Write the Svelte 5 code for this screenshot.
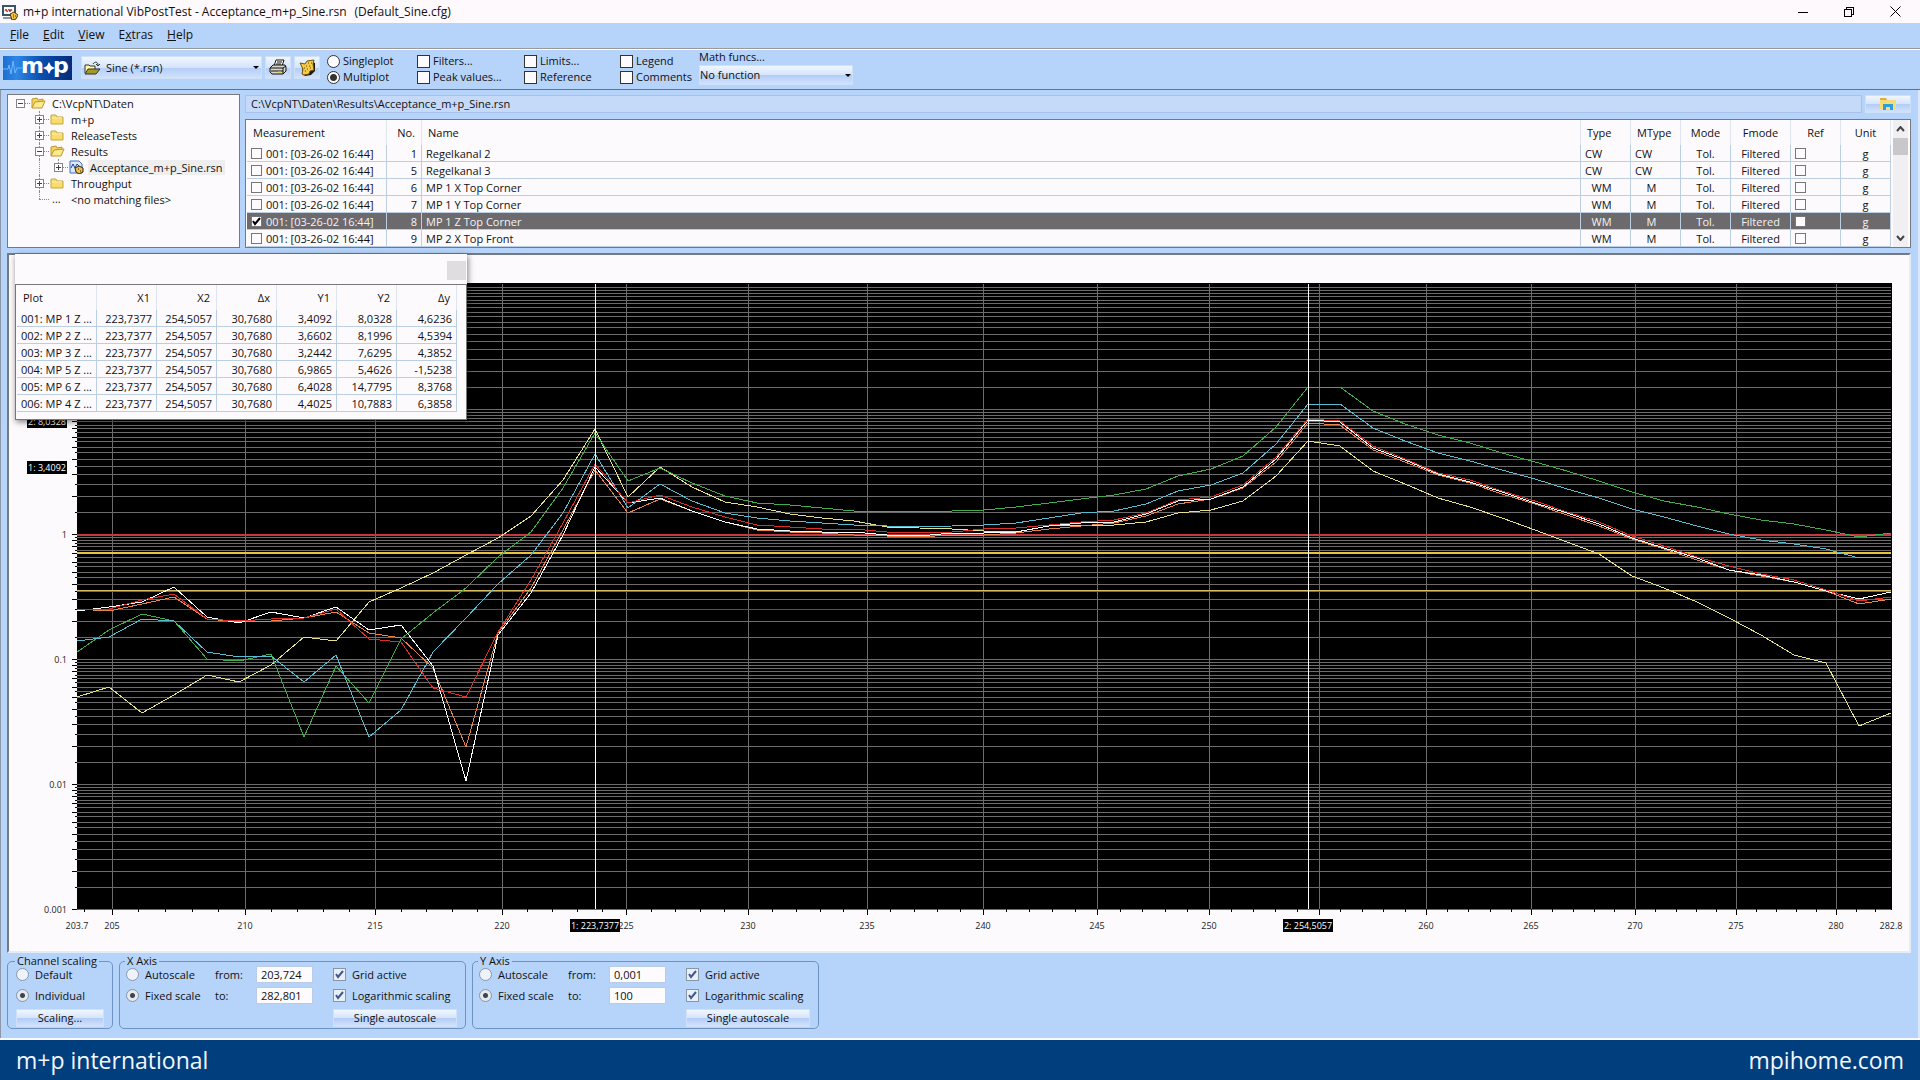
<script lang="ts">
    let width = $state(1900);
    let height = $state(696);

    const menu = ["File", "Edit", "View", "Extras", "Help"];
    const accessKey: Record<string, number> = { Extras: 1 };

    const tree = [
        { depth: 0, label: "C:\\VcpNT\\Daten", icon: "open", toggle: "-", last: true },
        { depth: 1, label: "m+p", icon: "folder", toggle: "+" },
        { depth: 1, label: "ReleaseTests", icon: "folder", toggle: "+" },
        { depth: 1, label: "Results", icon: "open", toggle: "-" },
        { depth: 2, label: "Acceptance_m+p_Sine.rsn", icon: "file", toggle: "+", selected: true, last: true },
        { depth: 1, label: "Throughput", icon: "folder", toggle: "+" },
        { depth: 1, label: "<no matching files>", icon: "dots", toggle: "", last: true }
    ];

    const optionGroups = [
        ["Filters...", "Peak values..."],
        ["Limits...", "Reference"],
        ["Legend", "Comments"]
    ];

    const stamp = "001: [03-26-02 16:44]";
    const channels = [
        { no: 1, name: "Regelkanal 2", type: "CW", mtype: "CW" },
        { no: 5, name: "Regelkanal 3", type: "CW", mtype: "CW" },
        { no: 6, name: "MP 1 X Top Corner", type: "WM", mtype: "M" },
        { no: 7, name: "MP 1 Y Top Corner", type: "WM", mtype: "M" },
        { no: 8, name: "MP 1 Z Top Corner", type: "WM", mtype: "M", selected: true },
        { no: 9, name: "MP 2 X Top Front", type: "WM", mtype: "M" }
    ];

    const readings = [
        ["001: MP 1 Z ...", "223,7377", "254,5057", "30,7680", "3,4092", "8,0328", "4,6236"],
        ["002: MP 2 Z ...", "223,7377", "254,5057", "30,7680", "3,6602", "8,1996", "4,5394"],
        ["003: MP 3 Z ...", "223,7377", "254,5057", "30,7680", "3,2442", "7,6295", "4,3852"],
        ["004: MP 5 Z ...", "223,7377", "254,5057", "30,7680", "6,9865", "5,4626", "-1,5238"],
        ["005: MP 6 Z ...", "223,7377", "254,5057", "30,7680", "6,4028", "14,7795", "8,3768"],
        ["006: MP 4 Z ...", "223,7377", "254,5057", "30,7680", "4,4025", "10,7883", "6,3858"]
    ];

    const axes = [
        { id: "x", title: "X Axis", from: "203,724", to: "282,801" },
        { id: "y", title: "Y Axis", from: "0,001", to: "100" }
    ];

    // Evenly spaced samples, measured down from the top of the plot (625 units = 5 decades)
    const traces = [
        { color: "#e6e08a", y: [413, 403, 429, 411, 391, 398, 381, 353, 357, 318, 304, 289, 271, 254, 232, 196, 145, 213, 183, 203, 218, 223, 230, 234, 237, 243, 244, 245, 247, 248, 242, 241, 241, 238, 229, 226, 217, 192, 157, 162, 187, 200, 214, 223, 234, 246, 258, 270, 292, 304, 318, 334, 351, 371, 379, 442, 429] },
        { color: "#3fae49", y: [368, 346, 330, 337, 375, 377, 370, 453, 382, 419, 355, 329, 304, 273, 248, 204, 149, 197, 184, 199, 212, 219, 221, 224, 227, 227, 227, 227, 226, 223, 219, 215, 211, 205, 192, 185, 172, 143, 103, 103, 127, 140, 151, 159, 169, 178, 187, 197, 208, 217, 223, 230, 236, 240, 246, 253, 249] },
        { color: "#56bdd2", y: [357, 353, 335, 337, 368, 373, 372, 398, 371, 453, 426, 368, 334, 300, 271, 229, 170, 224, 200, 217, 229, 234, 237, 239, 241, 242, 243, 242, 241, 239, 234, 229, 227, 220, 207, 201, 189, 160, 120, 120, 144, 157, 169, 177, 186, 195, 205, 214, 225, 233, 242, 250, 256, 260, 265, 274, 273] },
        { color: "#e8844a", y: [325, 327, 320, 313, 335, 338, 337, 334, 328, 349, 354, 384, 463, 349, 304, 246, 186, 229, 215, 227, 238, 246, 248, 249, 251, 252, 253, 251, 251, 249, 245, 242, 239, 232, 220, 215, 204, 178, 139, 141, 166, 178, 191, 199, 210, 220, 231, 242, 255, 265, 276, 286, 292, 298, 307, 320, 315] },
        { color: "#ffffff", y: [327, 323, 318, 303, 333, 339, 328, 334, 323, 346, 341, 382, 497, 351, 309, 251, 183, 219, 214, 227, 238, 245, 247, 248, 248, 251, 252, 249, 249, 248, 242, 239, 238, 230, 217, 215, 203, 175, 136, 138, 164, 176, 190, 198, 208, 219, 229, 240, 254, 264, 274, 286, 291, 298, 307, 315, 308] },
        { color: "#dc2f27", y: [325, 325, 316, 310, 335, 337, 335, 334, 325, 355, 358, 404, 413, 348, 296, 239, 180, 219, 211, 223, 233, 241, 243, 245, 245, 248, 249, 248, 245, 244, 241, 238, 236, 229, 216, 213, 201, 173, 135, 137, 162, 175, 189, 196, 207, 217, 228, 238, 252, 262, 273, 282, 290, 296, 306, 317, 313] }
    ];

    const limits = [
        { value: 1, color: "#c23a40", weight: 2 },
        { value: 0.72, color: "#e8bf3e", weight: 2 },
        { value: 0.354, color: "#d8bc62", weight: 1 },
        { value: 0.25, color: "#cc2222", weight: 1 }
    ];

    const xMin = 203.724;
    const xMax = 282.801;
    const left = 68;
    const top = 29;

    let right = $derived(width - 18);
    let bottom = $derived(height - 42);

    function xPos(v: number) {
        return Math.round(left + ((right - left) * Math.log(v / xMin)) / Math.log(xMax / xMin));
    }

    function yPos(v: number) {
        return Math.round(bottom - ((bottom - top) * (Math.log10(v) + 3)) / 5);
    }

    function points(ys: number[]) {
        return ys
            .map((y, i) => {
                const px = Math.round(left + ((right - left) * i) / (ys.length - 1));
                const py = Math.round(top + ((bottom - top) * y) / 625);
                return `${px},${py}`;
            })
            .join(" ");
    }

    const xTicks = Array.from({ length: 79 }, (_, i) => 204 + i);
    const yTicks: { value: number; long: boolean }[] = [];
    for (let decade = -3; decade < 2; decade++) {
        for (let half = 2; half < 20; half++) {
            yTicks.push({ value: (half / 2) * 10 ** decade, long: half % 2 === 0 });
        }
    }
    const yLabels = [
        [1, "1"],
        [0.1, "0.1"],
        [0.01, "0.01"],
        [0.001, "0.001"]
    ] as [number, string][];
    const cursors = [
        { x: 223.7377, y: 3.4092, xText: "1: 223,7377", yText: "1: 3,4092" },
        { x: 254.5057, y: 8.0328, xText: "2: 254,5057", yText: "2: 8,0328" }
    ];

    // A tick label that lies fully behind a cursor tag is left out
    function isCovered(tick: number) {
        return cursors.some((c) => Math.abs(xPos(c.x) - xPos(tick)) < 16);
    }
</script>

{#snippet folder()}
    <svg class="icon" width="15" height="14" viewBox="0 0 15 14">
        <path d="M1 3h5l1 2h6v7H1z" fill="#f7dc6c" stroke="#c9a53a" />
        <path d="M2 6h10" stroke="#fff3b0" />
    </svg>
{/snippet}

{#snippet openFolder()}
    <svg class="icon" width="15" height="14" viewBox="0 0 15 14">
        <path d="M1 12V3l5-1 1 2 5-1v3" fill="#f5d45c" stroke="#bd9730" />
        <path d="M1 12l3-6 10-1-3 7z" fill="#fbe98e" stroke="#bd9730" />
    </svg>
{/snippet}

<div class="window">
    <header class="titlebar">
        <svg width="16" height="16" viewBox="0 0 16 16">
            <path d="M0 1h14v11H0z" fill="#3b5568" />
            <path d="M2 3h10v7H2z" fill="#fff" />
            <path d="M3 7l1-2 1 3 2-3 1 3 1-3 1 2" fill="none" stroke="#b33" />
            <path d="M1 13h8v2H1z" fill="#8a9aa8" />
            <path d="M8 10l4-2 4 3-2 4-4 1z" fill="#f3c244" stroke="#4a3810" />
            <path d="M11 11h1M13 12h1M11 13h1" stroke="#5a4310" />
        </svg>
        <h1>m+p international VibPostTest - Acceptance_m+p_Sine.rsn</h1>
        <span class="config">(Default_Sine.cfg)</span>
        <div class="window-buttons">
            <button aria-label="Minimize">
                <svg width="10" height="10" viewBox="0 0 10 10"><path d="M0 5h10v1H0z" /></svg>
            </button>
            <button aria-label="Restore">
                <svg width="10" height="10" viewBox="0 0 10 10" fill="none" stroke="#000" shape-rendering="crispEdges">
                    <path d="M.5 2.500h7v7h-7zM2.500 2.500v-2h7v7h-2" />
                </svg>
            </button>
            <button aria-label="Close">
                <svg width="11" height="11" viewBox="0 0 11 11" stroke="#000"><path d="M.5.5l10 10M10.500.5l-10 10" /></svg>
            </button>
        </div>
    </header>

    <nav class="menubar">
        {#each menu as item}
            {@const k = accessKey[item] ?? 0}
            <button>{item.slice(0, k)}<u>{item[k]}</u>{item.slice(k + 1)}</button>
        {/each}
    </nav>

    <div class="toolbar">
        <svg class="logo" width="69" height="24" viewBox="0 0 69 24">
            <defs>
                <linearGradient id="logo-blue">
                    <stop offset="0" stop-color="#1c6fd0" />
                    <stop offset="0.2" stop-color="#2f86e4" />
                    <stop offset="0.55" stop-color="#0a4fae" />
                    <stop offset="1" stop-color="#062c78" />
                </linearGradient>
            </defs>
            <rect width="69" height="24" fill="url(#logo-blue)" />
            <path d="M0 13h5l1-4 2 9 2-13 2 12 2-5h5" fill="none" stroke="#6fb6ff" />
            <text x="18" y="17">m</text>
            <text x="50" y="17">p</text>
            <path d="M46 6l2 4 4 2-4 2-2 4-2-4-4-2 4-2z" fill="#fff" />
        </svg>

        <div class="file-type">
            <svg width="18" height="14" viewBox="0 0 18 14">
                <path d="M1 12V4h4l1 1h5v3" fill="#fff9a0" stroke="#333" />
                <path d="M1 13l3-5h12l-4 5z" fill="#a59a28" stroke="#333" />
                <path d="M9 3c2-3 5-2 5 1m-2-1l2 2 2-2" fill="none" stroke="#333" />
            </svg>
            <select aria-label="File type">
                <option>Sine (*.rsn)</option>
            </select>
        </div>
        <button class="tool" aria-label="Print">
            <svg width="18" height="17" viewBox="0 0 18 17" stroke="#111">
                <path d="M5 7l2-6h8l-2 6z" fill="#fff" />
                <path d="M8 3h5M7 5h5" />
                <path d="M1 9l3-3h12l1 2v4l-3 3H3l-2-2z" fill="#d7d7ca" />
                <path d="M1 9h13l3-2M2 12h12M14 9v6" fill="none" />
                <path d="M9 13h3" stroke="#e4c400" />
            </svg>
        </button>
        <button class="tool" aria-label="Notes">
            <svg width="17" height="17" viewBox="0 0 17 17">
                <path d="M3 6l4-1 3-3 6 2v8l-4 4-6 1-2-2z" fill="#1c1608" />
                <path d="M1 4l5 1 2-3 7-1-1 4 1 6-4 1-1 3-5 1-2-1 1-5z" fill="#f6cb45" stroke="#6c5010" />
                <path d="M9 4h1M12 4h1M7 7h1M10 7h1M5 9h1M8 10h1M11 9h1M6 12h1" stroke="#5d4308" />
            </svg>
        </button>

        <div class="options plot-mode">
            <label><input type="radio" name="plot-mode" />Singleplot</label>
            <label><input type="radio" name="plot-mode" checked />Multiplot</label>
        </div>
        {#each optionGroups as group}
            <div class="options">
                {#each group as option}
                    <label><input type="checkbox" />{option}</label>
                {/each}
            </div>
        {/each}
        <div class="math">
            <label for="math">Math funcs...</label>
            <select id="math">
                <option>No function</option>
            </select>
        </div>
    </div>

    <main>
        <div class="browser">
            <ul class="tree">
                {#each tree as node}
                    <li>
                        {#if node.depth === 2}<span class="branch through"></span>{/if}
                        <span class="branch" class:root={node.depth === 0} class:last={node.last}>
                            {#if node.toggle}
                                <button class="toggle" class:plus={node.toggle === "+"} aria-label="Toggle {node.label}"></button>
                            {/if}
                        </span>
                        <span class="node-icon">
                            {#if node.icon === "open"}
                                {@render openFolder()}
                            {:else if node.icon === "folder"}
                                {@render folder()}
                            {:else if node.icon === "file"}
                                <svg class="icon" width="15" height="14" viewBox="0 0 15 14">
                                    <path d="M1 1h9l3 3v9H1z" fill="#dce9fb" stroke="#3d6dc0" />
                                    <path d="M2 8l2-4 2 4 2-4 2 2" fill="none" stroke="#1d3f99" />
                                    <path d="M6 8l4-2 4 2v4l-4 2-3-2z" fill="#e9c052" stroke="#2d2410" />
                                    <path d="M9 9h1M11 11h1" stroke="#2d2410" />
                                </svg>
                            {:else}
                                <span class="dots">...</span>
                            {/if}
                        </span>
                        <span class="node-label" class:selected={node.selected}>{node.label}</span>
                    </li>
                {/each}
            </ul>

            <section class="results">
                <div class="path-row">
                    <div class="path">C:\VcpNT\Daten\Results\Acceptance_m+p_Sine.rsn</div>
                    <button class="explore" aria-label="Open in explorer">
                        <svg width="18" height="14" viewBox="0 0 18 14">
                            <path d="M1 1h6l1 2h9v10H1z" fill="#f8dc7a" />
                            <path d="M1 1h6l1 2H1z" fill="#dcae3a" />
                            <path d="M4 13V7h10v6h-3v-3H7v3z" fill="#2f9fd8" />
                        </svg>
                    </button>
                </div>
                <div class="grid-box">
                    <table class="channels">
                        <colgroup>
                            <col class="w-measurement" />
                            <col class="w-no" />
                            <col />
                            <col class="w-short" />
                            <col class="w-short" />
                            <col class="w-short" />
                            <col class="w-fmode" />
                            <col class="w-short" />
                            <col class="w-short" />
                        </colgroup>
                        <thead>
                            <tr>
                                <th>Measurement</th>
                                <th class="num">No.</th>
                                <th>Name</th>
                                <th>Type</th>
                                <th>MType</th>
                                <th class="mid">Mode</th>
                                <th class="mid">Fmode</th>
                                <th class="mid">Ref</th>
                                <th class="mid">Unit</th>
                            </tr>
                        </thead>
                        <tbody>
                            {#each channels as c}
                                <tr class:selected={c.selected}>
                                    <td><label><input type="checkbox" checked={c.selected} />{stamp}</label></td>
                                    <td class="num">{c.no}</td>
                                    <td>{c.name}</td>
                                    <td class="kind" class:mid={c.type === "WM"}>{c.type}</td>
                                    <td class="kind" class:mid={c.mtype === "M"}>{c.mtype}</td>
                                    <td class="mid">Tol.</td>
                                    <td class="mid">Filtered</td>
                                    <td><input type="checkbox" aria-label="Reference {c.name}" /></td>
                                    <td class="mid">g</td>
                                </tr>
                            {/each}
                        </tbody>
                    </table>
                    <div class="scrollbar">
                        <button aria-label="Scroll up">
                            <svg width="9" height="6" viewBox="0 0 9 6"><path d="M1 5l3.500-4L8 5" /></svg>
                        </button>
                        <div class="thumb"></div>
                        <button aria-label="Scroll down">
                            <svg width="9" height="6" viewBox="0 0 9 6"><path d="M1 1l3.500 4L8 1" /></svg>
                        </button>
                    </div>
                </div>
            </section>
        </div>

        <section class="plot">
            <div class="canvas" bind:clientWidth={width} bind:clientHeight={height}>
                <svg {width} {height} shape-rendering="crispEdges">
                    <rect x={left} y={top - 1} width={right - left + 1} height={bottom - top + 2} fill="#000" />

                    {#each yTicks as t}
                        <rect class="grid" x={left} y={yPos(t.value)} width={right - left} height="1" />
                        <rect x={left - (t.long ? 5 : 2)} y={yPos(t.value)} width={t.long ? 5 : 2} height="1" />
                    {/each}
                    {#each xTicks as t}
                        {#if t % 5 === 0}
                            <rect class="grid" x={xPos(t)} y={top} width="1" height={bottom - top} />
                            <rect x={xPos(t)} y={bottom} width="1" height="6" />
                            {#if !isCovered(t)}
                                <text x={xPos(t)} y={bottom + 20} text-anchor="middle">{t}</text>
                            {/if}
                        {:else}
                            <rect x={xPos(t)} y={bottom} width="1" height="3" />
                        {/if}
                    {/each}
                    <text x={left} y={bottom + 20} text-anchor="middle">203.7</text>
                    <text x={right} y={bottom + 20} text-anchor="middle">282.8</text>
                    {#each yLabels as [value, label]}
                        <text x={left - 10} y={yPos(value) + 4} text-anchor="end">{label}</text>
                    {/each}

                    {#each limits as l}
                        <rect x={left} y={yPos(l.value)} width={right - left} height={l.weight} fill={l.color} />
                    {/each}
                    {#each traces as t}
                        <polyline points={points(t.y)} fill="none" stroke={t.color} />
                    {/each}

                    {#each cursors as c}
                        <rect x={xPos(c.x)} y={top} width="1" height={bottom - top} fill="#fff" />
                        <rect x={xPos(c.x) - 25} y={bottom + 10} width="50" height="13" />
                        <text class="tag" x={xPos(c.x)} y={bottom + 20} text-anchor="middle">{c.xText}</text>
                        <rect x={left - 50} y={yPos(c.y) - 6} width="40" height="13" />
                        <text class="tag" x={left - 30} y={yPos(c.y) + 4} text-anchor="middle">{c.yText}</text>
                    {/each}
                </svg>
            </div>

            <div class="readout">
                <div class="readout-title"><button aria-label="Close readout"></button></div>
                <div class="readout-body">
                    <table>
                        <thead>
                            <tr>
                                <th>Plot</th>
                                <th>X1</th>
                                <th>X2</th>
                                <th>Δx</th>
                                <th>Y1</th>
                                <th>Y2</th>
                                <th>Δy</th>
                            </tr>
                        </thead>
                        <tbody>
                            {#each readings as row}
                                <tr>
                                    {#each row as cell}<td>{cell}</td>{/each}
                                </tr>
                            {/each}
                        </tbody>
                    </table>
                </div>
            </div>
        </section>

        <div class="settings">
            <fieldset class="channel-scaling">
                <legend>Channel scaling</legend>
                <label><input type="radio" name="channel-scaling" />Default</label>
                <label><input type="radio" name="channel-scaling" checked />Individual</label>
                <button class="push">Scaling...</button>
            </fieldset>
            {#each axes as axis}
                <fieldset class="axis">
                    <legend>{axis.title}</legend>
                    <label><input type="radio" name="{axis.id}-scale" />Autoscale</label>
                    <label for="{axis.id}-from">from:</label>
                    <input id="{axis.id}-from" type="text" value={axis.from} />
                    <label><input type="checkbox" checked />Grid active</label>
                    <label><input type="radio" name="{axis.id}-scale" checked />Fixed scale</label>
                    <label for="{axis.id}-to">to:</label>
                    <input id="{axis.id}-to" type="text" value={axis.to} />
                    <label><input type="checkbox" checked />Logarithmic scaling</label>
                    <button class="push">Single autoscale</button>
                </fieldset>
            {/each}
        </div>
    </main>

    <footer>
        <span>m+p international</span>
        <a href="https://mpihome.com">mpihome.com</a>
    </footer>
</div>

<style>
    :global(body) {
        margin: 0;
    }
    .window {
        display: flex;
        flex-direction: column;
        height: 100vh;
        min-height: 700px;
        box-sizing: border-box;
        background: #b6d3fa;
        color: #111;
        font: 11px/16px "Open Sans", "Noto Sans", sans-serif;
    }
    .window * {
        box-sizing: border-box;
    }
    button,
    input,
    select {
        font: inherit;
        color: inherit;
        margin: 0;
        padding: 0;
        border: 0;
        border-radius: 0;
        background: none;
    }
    svg {
        display: block;
        flex: none;
    }
    label {
        display: flex;
        align-items: center;
        white-space: nowrap;
    }

    .titlebar {
        display: flex;
        align-items: center;
        height: 23px;
        padding-left: 2px;
        background: #fdf9fc;
        font-size: 12px;
    }
    h1 {
        margin: 0 0 0 5px;
        font-size: 12px;
        font-weight: normal;
    }
    .config {
        margin-left: 8px;
    }
    .window-buttons {
        display: flex;
        margin-left: auto;
    }
    .window-buttons button {
        display: grid;
        place-items: center;
        width: 46px;
        height: 20px;
    }
    .window-buttons button:last-child {
        margin-right: 2px;
    }

    .menubar {
        display: flex;
        gap: 14px;
        height: 27px;
        padding: 0 10px 2px;
        border-bottom: 1px solid #fff;
        box-shadow: inset 0 -1px #999;
        font-size: 12px;
    }

    .toolbar {
        display: flex;
        height: 40px;
        padding: 6px 3px 0;
        border-bottom: 1px solid #6c7178;
    }
    .logo {
        overflow: visible;
    }
    .logo text {
        font: bold 22px "DejaVu Sans", sans-serif;
        fill: #fff;
    }
    .file-type {
        display: flex;
        align-items: center;
        width: 181px;
        height: 23px;
        margin-left: 9px;
        padding-left: 2px;
    }
    .file-type select {
        flex: 1;
        align-self: stretch;
        padding-left: 4px;
        background: none;
        border: 0;
    }
    .file-type,
    .math select,
    .tool,
    .explore,
    .push {
        border: 1px solid #cfe0f8;
        background: linear-gradient(#f0f6ff, #d5e4fb 50%, #b4cdf7 52%, #d0e2fc);
    }
    select {
        appearance: none;
    }
    .file-type,
    .math {
        position: relative;
    }
    .file-type::after,
    .math::after {
        content: "";
        position: absolute;
        right: 2px;
        top: 9px;
        border: 3px solid transparent;
        border-top-color: #000;
        pointer-events: none;
    }
    .tool {
        display: grid;
        place-items: center;
        width: 26px;
        height: 23px;
        margin-left: 3px;
    }
    .options {
        width: 107px;
        margin-top: -3px;
    }
    .options + .options ~ .options {
        width: 96px;
    }
    .plot-mode {
        width: 90px;
        margin-left: 7px;
    }
    .options input {
        margin-right: 3px;
    }
    .math {
        width: 154px;
        margin: -7px 0 0 -17px;
    }
    .math label {
        height: 16px;
    }
    .math select {
        width: 100%;
        height: 20px;
    }
    .math::after {
        top: 25px;
    }

    input[type="checkbox"],
    input[type="radio"] {
        flex: none;
        appearance: none;
        width: 13px;
        height: 13px;
        border: 1px solid #333;
        background: #fdfbfe;
    }
    input[type="radio"] {
        border-radius: 50%;
    }
    input[type="radio"]:checked {
        background: radial-gradient(#333 3px, #fdfbfe 4px);
    }
    input[type="checkbox"]:checked {
        background: #fdfbfe
            url("data:image/svg+xml,%3Csvg xmlns='http://www.w3.org/2000/svg' viewBox='0 0 9 9'%3E%3Cpath d='M1 4l2 3 5-6' fill='none' stroke='black' stroke-width='2'/%3E%3C/svg%3E")
            center / 9px no-repeat;
    }

    main {
        display: flex;
        flex: 1;
        flex-direction: column;
        min-height: 0;
        padding: 4px 9px 9px 6px;
        border: solid #8b97a8;
        border-width: 0 0 0 1px;
        box-shadow: inset -2px 0 #dbe7fa;
    }
    .browser {
        display: flex;
        gap: 5px;
    }
    .tree {
        width: 233px;
        height: 154px;
        margin: 0;
        padding: 0 0 0 3px;
        border: 1px solid #75797f;
        background: #fdfafd;
        list-style: none;
    }
    .tree li {
        display: flex;
        align-items: center;
        height: 16px;
    }
    .tree li:not(:first-child) {
        padding-left: 19px;
    }
    .branch {
        position: relative;
        display: grid;
        place-items: center;
        width: 19px;
        height: 16px;
    }
    .branch::before {
        content: "";
        position: absolute;
        left: 9px;
        top: 0;
        height: 100%;
        border-left: 1px dotted #888;
    }
    .branch.last::before {
        height: 8px;
    }
    .branch.root::before {
        display: none;
    }
    .branch::after {
        content: "";
        position: absolute;
        left: 9px;
        top: 8px;
        width: 10px;
        border-top: 1px dotted #888;
    }
    .branch.through::after {
        display: none;
    }
    .toggle {
        z-index: 1;
        width: 9px;
        height: 9px;
        border: 1px solid #858585;
        background: linear-gradient(#444, #444) center / 5px 1px no-repeat #fff;
    }
    .toggle.plus {
        background:
            linear-gradient(#444, #444) center / 5px 1px no-repeat,
            linear-gradient(#444, #444) center / 1px 5px no-repeat #fff;
    }
    .node-icon {
        width: 20px;
        padding-left: 1px;
    }
    .dots {
        padding-left: 2px;
    }
    .node-label {
        padding: 0 2px;
        line-height: 15px;
        white-space: nowrap;
    }
    .node-label.selected {
        background: #eeeeef;
    }

    .results {
        flex: 1;
        min-width: 0;
    }
    .path-row {
        display: flex;
        gap: 3px;
        height: 25px;
        padding-top: 1px;
    }
    .path {
        flex: 1;
        height: 18px;
        padding-left: 5px;
        border: 1px solid #a9c1e6;
        background: #c5daf9;
    }
    .explore {
        display: grid;
        place-items: center;
        width: 46px;
        height: 18px;
    }
    .grid-box {
        display: flex;
        height: 129px;
        padding: 0 2px 0 1px;
        border: 1px solid #75797f;
        background: #fdfafd;
        overflow: hidden;
    }
    table {
        border-collapse: separate;
        border-spacing: 0;
        table-layout: fixed;
    }
    th,
    td {
        height: 17px;
        padding: 0 4px;
        border: solid #bccfe2;
        border-width: 0 1px 1px 0;
        font-weight: normal;
        line-height: 15px;
        text-align: left;
        white-space: nowrap;
    }
    th {
        height: 25px;
        padding: 0 6px;
        border-bottom: 0;
        border-right-color: #dfe5ec;
    }
    .channels {
        flex: 1;
        min-width: 0;
    }
    .w-measurement {
        width: 140px;
    }
    .w-no {
        width: 35px;
    }
    .w-short {
        width: 50px;
    }
    .w-fmode {
        width: 60px;
    }
    th.num,
    td.num {
        text-align: right;
    }
    th.mid,
    td.mid {
        text-align: center;
    }
    td.kind.mid {
        padding-right: 12px;
    }
    .channels tr.selected td {
        background: #6c6a6c;
        color: #f4f2f4;
    }
    .channels input[type="checkbox"] {
        display: block;
        width: 11px;
        height: 11px;
        margin-right: 4px;
        border-color: #777;
    }
    .scrollbar {
        display: flex;
        flex-direction: column;
        align-items: center;
        width: 15px;
        margin-left: 2px;
        background: #f1eff2;
    }
    .scrollbar button {
        display: grid;
        place-items: center;
        height: 18px;
    }
    .scrollbar button:last-child {
        margin-top: auto;
    }
    .scrollbar path {
        fill: none;
        stroke: #444;
        stroke-width: 2;
    }
    .thumb {
        width: 15px;
        height: 17px;
        background: #c8c7c9;
    }

    .plot {
        position: relative;
        display: flex;
        flex: 1;
        min-height: 0;
        margin-top: 5px;
        border: 2px solid;
        border-color: #747a83 #e4ecf7 #e4ecf7 #747a83;
        background: #fdfafd;
    }
    .canvas {
        flex: 1;
        min-width: 0;
        overflow: hidden;
    }
    .canvas text {
        font-size: 9px;
        fill: #222;
    }
    .canvas .grid {
        fill: #6c6c6c;
    }
    .canvas .tag {
        fill: #fff;
    }
    .readout {
        position: absolute;
        left: 6px;
        top: -1px;
        width: 452px;
        background: #fdfafd;
        box-shadow: 1px 2px 6px rgba(0, 0, 0, 0.5);
    }
    .readout-title {
        display: flex;
        justify-content: flex-end;
        height: 30px;
        padding: 7px 1px;
    }
    .readout-title button {
        width: 19px;
        height: 19px;
        background: #dfdde0;
    }
    .readout-body {
        padding: 0 9px 7px 1px;
        border: 1px solid #777;
    }
    .readout table {
        width: 100%;
    }
    .readout th,
    .readout td {
        width: 60px;
        text-align: right;
    }
    .readout th:first-child,
    .readout td:first-child {
        width: 80px;
        padding-right: 0;
        text-align: left;
    }

    .settings {
        display: flex;
        gap: 6px;
        margin-top: 2px;
    }
    fieldset {
        display: grid;
        grid-template-rows: 21px 21px 18px;
        align-items: start;
        margin: 0;
        padding: 0 8px 1px;
        border: 1px solid #6d93c4;
        border-radius: 5px;
    }
    legend {
        margin-left: -1px;
        padding: 0 2px;
        line-height: 12px;
    }
    fieldset label {
        height: 15px;
    }
    fieldset label input[type] {
        margin-right: 6px;
        border-color: #8996a8;
        background-color: #eef3fb;
    }
    fieldset input[type="radio"] {
        background: #e4ecf8;
    }
    fieldset input[type="radio"]:checked {
        background: radial-gradient(#33475c 2px, #e8e8e8 3px);
    }
    fieldset input[type="checkbox"]:checked {
        background: #e9eff9
            url("data:image/svg+xml,%3Csvg xmlns='http://www.w3.org/2000/svg' viewBox='0 0 9 9'%3E%3Cpath d='M1 4l2 3 5-6' fill='none' stroke='%23415a8c' stroke-width='2'/%3E%3C/svg%3E")
            center / 9px no-repeat;
    }
    .channel-scaling {
        width: 106px;
    }
    .axis {
        grid-template-columns: 89px 41px 77px 124px;
        padding-left: 6px;
    }
    .axis input[type="text"] {
        width: 57px;
        height: 17px;
        margin-top: -1px;
        padding-left: 4px;
        border: 1px solid #b9cbe6;
        background: #fdfbfe;
    }
    .push {
        height: 18px;
        line-height: 16px;
    }
    .axis .push {
        grid-column: 4;
    }

    footer {
        display: flex;
        align-items: center;
        justify-content: space-between;
        height: 42px;
        padding: 0 16px;
        border-top: 2px solid #fdfafd;
        background: #003e7d;
        color: #f2f7fc;
        font-size: 23px;
    }
    footer a {
        color: inherit;
        text-decoration: none;
    }
</style>
